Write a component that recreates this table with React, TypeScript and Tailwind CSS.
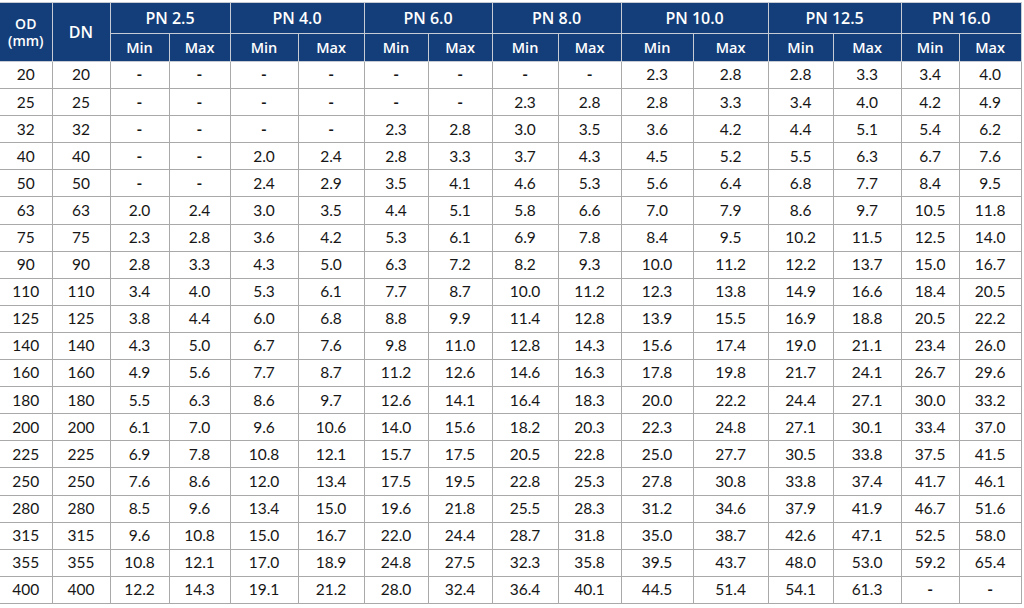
const groups = ["PN 2.5", "PN 4.0", "PN 6.0", "PN 8.0", "PN 10.0", "PN 12.5", "PN 16.0"];

const widths = [52, 58, 59, 61, 68, 66, 64, 64, 66, 63, 72, 75, 65, 68, 58, 62];

const rows: string[][] = [
  ["20", "20", "-", "-", "-", "-", "-", "-", "-", "-", "2.3", "2.8", "2.8", "3.3", "3.4", "4.0"],
  ["25", "25", "-", "-", "-", "-", "-", "-", "2.3", "2.8", "2.8", "3.3", "3.4", "4.0", "4.2", "4.9"],
  ["32", "32", "-", "-", "-", "-", "2.3", "2.8", "3.0", "3.5", "3.6", "4.2", "4.4", "5.1", "5.4", "6.2"],
  ["40", "40", "-", "-", "2.0", "2.4", "2.8", "3.3", "3.7", "4.3", "4.5", "5.2", "5.5", "6.3", "6.7", "7.6"],
  ["50", "50", "-", "-", "2.4", "2.9", "3.5", "4.1", "4.6", "5.3", "5.6", "6.4", "6.8", "7.7", "8.4", "9.5"],
  ["63", "63", "2.0", "2.4", "3.0", "3.5", "4.4", "5.1", "5.8", "6.6", "7.0", "7.9", "8.6", "9.7", "10.5", "11.8"],
  ["75", "75", "2.3", "2.8", "3.6", "4.2", "5.3", "6.1", "6.9", "7.8", "8.4", "9.5", "10.2", "11.5", "12.5", "14.0"],
  ["90", "90", "2.8", "3.3", "4.3", "5.0", "6.3", "7.2", "8.2", "9.3", "10.0", "11.2", "12.2", "13.7", "15.0", "16.7"],
  ["110", "110", "3.4", "4.0", "5.3", "6.1", "7.7", "8.7", "10.0", "11.2", "12.3", "13.8", "14.9", "16.6", "18.4", "20.5"],
  ["125", "125", "3.8", "4.4", "6.0", "6.8", "8.8", "9.9", "11.4", "12.8", "13.9", "15.5", "16.9", "18.8", "20.5", "22.2"],
  ["140", "140", "4.3", "5.0", "6.7", "7.6", "9.8", "11.0", "12.8", "14.3", "15.6", "17.4", "19.0", "21.1", "23.4", "26.0"],
  ["160", "160", "4.9", "5.6", "7.7", "8.7", "11.2", "12.6", "14.6", "16.3", "17.8", "19.8", "21.7", "24.1", "26.7", "29.6"],
  ["180", "180", "5.5", "6.3", "8.6", "9.7", "12.6", "14.1", "16.4", "18.3", "20.0", "22.2", "24.4", "27.1", "30.0", "33.2"],
  ["200", "200", "6.1", "7.0", "9.6", "10.6", "14.0", "15.6", "18.2", "20.3", "22.3", "24.8", "27.1", "30.1", "33.4", "37.0"],
  ["225", "225", "6.9", "7.8", "10.8", "12.1", "15.7", "17.5", "20.5", "22.8", "25.0", "27.7", "30.5", "33.8", "37.5", "41.5"],
  ["250", "250", "7.6", "8.6", "12.0", "13.4", "17.5", "19.5", "22.8", "25.3", "27.8", "30.8", "33.8", "37.4", "41.7", "46.1"],
  ["280", "280", "8.5", "9.6", "13.4", "15.0", "19.6", "21.8", "25.5", "28.3", "31.2", "34.6", "37.9", "41.9", "46.7", "51.6"],
  ["315", "315", "9.6", "10.8", "15.0", "16.7", "22.0", "24.4", "28.7", "31.8", "35.0", "38.7", "42.6", "47.1", "52.5", "58.0"],
  ["355", "355", "10.8", "12.1", "17.0", "18.9", "24.8", "27.5", "32.3", "35.8", "39.5", "43.7", "48.0", "53.0", "59.2", "65.4"],
  ["400", "400", "12.2", "14.3", "19.1", "21.2", "28.0", "32.4", "36.4", "40.1", "44.5", "51.4", "54.1", "61.3", "-", "-"],
];

const head = "border border-[#c6cbd4] bg-[#143e79] text-white font-semibold";

export default function App() {
  return (
    <div className="h-[608px] w-[1024px] overflow-hidden bg-white pt-[2px] font-['Open_Sans',sans-serif]">
      <table className="w-[1021px] table-fixed border-collapse text-center">
        <colgroup>
          {widths.map((w, i) => (
            <col key={i} style={{ width: w }} />
          ))}
        </colgroup>
        <thead>
          <tr className="h-[31px]">
            <th rowSpan={2} className={`${head} text-[14px] leading-[17px] border-l-0`}>
              OD
              <br />
              (mm)
            </th>
            <th rowSpan={2} className={`${head} text-[16px]`}>
              DN
            </th>
            {groups.map((g) => (
              <th key={g} colSpan={2} className={`${head} text-[16px]`}>
                {g}
              </th>
            ))}
          </tr>
          <tr className="h-[28px]">
            {groups.map((g) => (
              <>
                <th key={g + "min"} className={`${head} text-[14.5px]`}>
                  Min
                </th>
                <th key={g + "max"} className={`${head} text-[14.5px]`}>
                  Max
                </th>
              </>
            ))}
          </tr>
        </thead>
        <tbody className="font-['Lato',sans-serif] text-[15.5px] text-[#161616]">
          {rows.map((r) => (
            <tr key={r[0]} className="h-[27.1px]">
              {r.map((v, i) => (
                <td
                  key={i}
                  className={`border border-[#a9a9a9] p-0 ${i === 0 ? "border-l-0" : ""} ${v === "-" ? "font-bold" : ""}`}
                >
                  {v}
                </td>
              ))}
            </tr>
          ))}
        </tbody>
      </table>
    </div>
  );
}
